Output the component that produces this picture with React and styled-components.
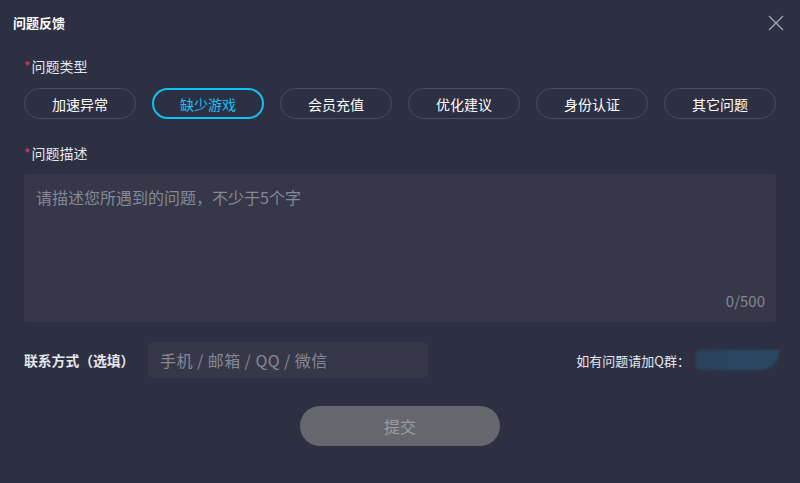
import React, { useState } from "react";
import styled, { createGlobalStyle } from "styled-components";

const GlobalStyle = createGlobalStyle`
  html, body {
    margin: 0;
    padding: 0;
    background: #2d3042;
  }
  * {
    box-sizing: border-box;
  }
`;

const types = ["加速异常", "缺少游戏", "会员充值", "优化建议", "身份认证", "其它问题"];

const App = () => {
  const [active, setActive] = useState(1);
  const [text, setText] = useState("");

  return (
    <>
      <GlobalStyle />
      <Dialog>
        <Header>
          <Title>问题反馈</Title>
          <Close aria-label="close">
            <svg width="16" height="16" viewBox="0 0 16 16">
              <path d="M1 1 L15 15 M15 1 L1 15" stroke="#a3a6b2" strokeWidth="1.3" fill="none" />
            </svg>
          </Close>
        </Header>
        <Body>
          <Label>
            <Star>*</Star>问题类型
          </Label>
          <TypeRow>
            {types.map((t, i) => (
              <TypeBtn key={t} $active={active === i} onClick={() => setActive(i)}>
                {t}
              </TypeBtn>
            ))}
          </TypeRow>
          <Label $top={24}>
            <Star>*</Star>问题描述
          </Label>
          <TextBox>
            <TextArea
              placeholder="请描述您所遇到的问题，不少于5个字"
              value={text}
              maxLength={500}
              onChange={(e) => setText(e.target.value)}
            />
            <Counter>{text.length}/500</Counter>
          </TextBox>
          <ContactRow>
            <ContactLabel>联系方式（选填）</ContactLabel>
            <ContactInput placeholder="手机 / 邮箱 / QQ / 微信" />
            <Spacer />
            <GroupText>如有问题请加Q群：</GroupText>
            <Blur />
          </ContactRow>
          <Footer>
            <Submit disabled>提交</Submit>
          </Footer>
        </Body>
      </Dialog>
    </>
  );
};
export default App;

const Dialog = styled.div`
  width: 800px;
  height: 483px;
  background: #2d3042;
  font-family: "Noto Sans CJK SC", "Noto Sans", sans-serif;
  color: #e6e8ef;
  overflow: hidden;
`;
const Header = styled.div`
  height: 46px;
  display: flex;
  align-items: center;
  justify-content: space-between;
  padding: 0 16px 0 13px;
`;
const Title = styled.div`
  font-size: 13px;
  font-weight: bold;
  color: #ffffff;
  line-height: 20px;
`;
const Close = styled.div`
  width: 16px;
  height: 16px;
  margin-top: -1px;
  cursor: pointer;
  svg {
    display: block;
  }
`;
const Body = styled.div`
  padding: 0 24px;
  display: flex;
  flex-direction: column;
`;
const Label = styled.div`
  margin-top: ${(p) => (p.$top ? p.$top : 10)}px;
  font-size: 14px;
  line-height: 20px;
  color: #e3e6ee;
`;
const Star = styled.span`
  color: #e8394a;
  margin-right: 1px;
`;
const TypeRow = styled.div`
  margin-top: 12px;
  display: flex;
  gap: 16px;
`;
const TypeBtn = styled.button`
  width: 112px;
  height: 31px;
  border-radius: 16px;
  background: transparent;
  border: ${(p) => (p.$active ? "2px solid #0fc2f2" : "1px solid #4c4f62")};
  color: ${(p) => (p.$active ? "#17c0f0" : "#ffffff")};
  font-family: inherit;
  font-size: 14px;
  padding: 0;
  cursor: pointer;
`;
const TextBox = styled.div`
  margin-top: 11px;
  height: 148px;
  background: #363849;
  border-radius: 4px;
  position: relative;
`;
const TextArea = styled.textarea`
  width: 100%;
  height: 100%;
  resize: none;
  border: none;
  outline: none;
  background: transparent;
  padding: 11px 12px 30px;
  font-family: inherit;
  font-size: 16px;
  line-height: 24px;
  color: #e6e8ef;
  &::placeholder {
    color: #858896;
  }
`;
const Counter = styled.span`
  position: absolute;
  right: 11px;
  bottom: 11px;
  font-size: 15px;
  line-height: 20px;
  color: #858896;
`;
const ContactRow = styled.div`
  margin-top: 20px;
  height: 36px;
  display: flex;
  align-items: center;
`;
const ContactLabel = styled.div`
  width: 124px;
  font-size: 13.8px;
  font-weight: bold;
  color: #e6e8ef;
`;
const ContactInput = styled.input`
  width: 280px;
  height: 36px;
  border: none;
  outline: none;
  border-radius: 6px;
  background: #363849;
  padding: 0 12px;
  font-family: inherit;
  font-size: 16px;
  letter-spacing: 0.45px;
  color: #e6e8ef;
  &::placeholder {
    color: #858896;
  }
`;
const Spacer = styled.div`
  flex: 1;
`;
const GroupText = styled.div`
  font-size: 13px;
  color: #e6e8ef;
`;
const Blur = styled.div`
  width: 84px;
  height: 20px;
  margin-left: 6px;
  margin-right: -4px;
  background: linear-gradient(90deg, #2b4259, #2a4763 60%, #2b4660);
  border-radius: 6px 0 40px 10px;
  filter: blur(1px);
`;
const Footer = styled.div`
  margin-top: 28px;
  display: flex;
  justify-content: center;
`;
const Submit = styled.button`
  width: 200px;
  height: 40px;
  border: none;
  border-radius: 20px;
  background: #66676c;
  color: #9b9ca2;
  font-family: inherit;
  font-size: 16px;
  cursor: not-allowed;
`;
